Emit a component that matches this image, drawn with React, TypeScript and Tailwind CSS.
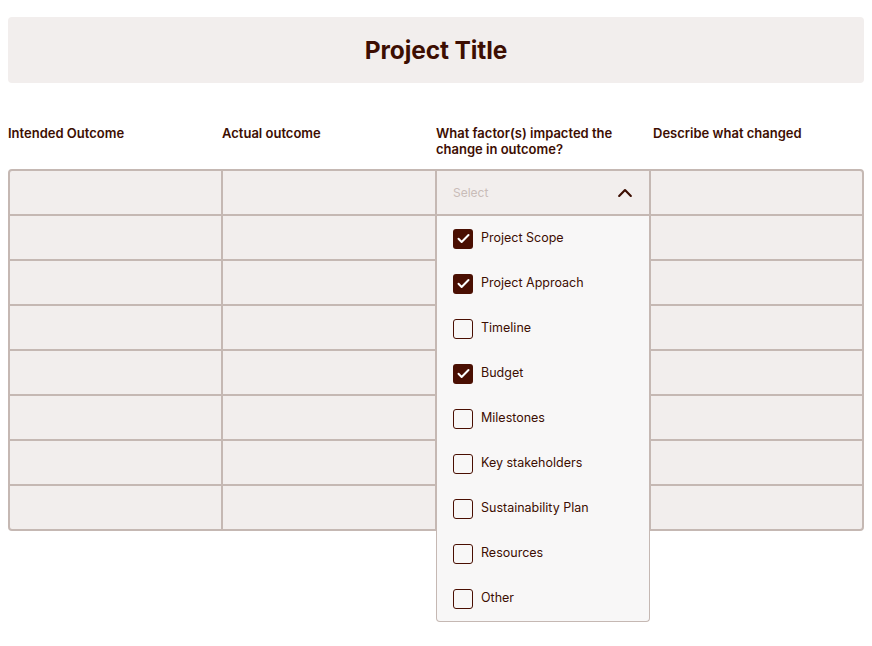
import React, { useState } from 'react';

const factors = [
  { label: 'Project Scope', checked: true },
  { label: 'Project Approach', checked: true },
  { label: 'Timeline', checked: false },
  { label: 'Budget', checked: true },
  { label: 'Milestones', checked: false },
  { label: 'Key stakeholders', checked: false },
  { label: 'Sustainability Plan', checked: false },
  { label: 'Resources', checked: false },
  { label: 'Other', checked: false },
];

const headers = [
  'Intended Outcome',
  'Actual outcome',
  'What factor(s) impacted the change in outcome?',
  'Describe what changed',
];

function CheckBox({ checked }: { checked: boolean }) {
  if (checked) {
    return (
      <span className="w-5 h-5 rounded-[3px] bg-[#4a0f02] flex items-center justify-center shrink-0">
        <svg width="15" height="15" viewBox="0 0 24 24" fill="none" stroke="white" strokeWidth="3.2" strokeLinecap="round" strokeLinejoin="round">
          <path d="M4 12.5l5 5L20 6.5" />
        </svg>
      </span>
    );
  }
  return <span className="w-5 h-5 rounded-[3px] border-[1.5px] border-[#4a0f02] bg-[#f8f7f7] shrink-0" />;
}

export default function App() {
  const [items, setItems] = useState(factors);
  const [open, setOpen] = useState(true);

  const toggle = (i: number) =>
    setItems(list => list.map((f, j) => (j === i ? { ...f, checked: !f.checked } : f)));

  return (
    <div className="min-h-screen bg-white px-2 pt-[17px] font-['Inter',sans-serif] text-[#3d0e02]">
      {/* Title */}
      <div className="h-[66px] rounded bg-[#f2eeed] flex items-center justify-center">
        <h1 className="text-[24.5px] font-bold tracking-[-0.1px]">Project Title</h1>
      </div>

      {/* Column headings */}
      <div className="grid grid-cols-[214px_214px_214px_1fr] mt-[42px] h-[44px]">
        {headers.map((h, i) => (
          <div key={h} className={`text-[13px] leading-4 font-semibold pr-5 ${i === 3 ? 'pl-[3px]' : ''}`}>
            {h}
          </div>
        ))}
      </div>

      {/* Table */}
      <div className="border-2 border-[#c5b8b3] rounded bg-[#f2eeed]">
        {Array.from({ length: 8 }).map((_, r) => (
          <div key={r} className={`grid grid-cols-[213px_214px_214px_1fr] h-[43px] ${r < 7 ? 'border-b-2 border-[#c5b8b3] box-content' : ''}`}>
            {[0, 1, 2, 3].map(c => (
              <div key={c} className={`relative ${c < 3 ? 'border-r-2 border-[#c5b8b3]' : ''}`}>
                {r === 0 && c === 2 && (
                  <>
                    <button
                      onClick={() => setOpen(o => !o)}
                      className="w-full h-full flex items-center justify-between pl-[16px] pr-[14px] text-[12px] text-[#c9bcb8]"
                    >
                      <span>Select</span>
                      <svg width="20" height="20" viewBox="0 0 24 24" fill="none" stroke="#3d0e02" strokeWidth="2.6" strokeLinecap="round" strokeLinejoin="round">
                        <path d="M5 15.5l7-7 7 7" />
                      </svg>
                    </button>
                    {open && (
                      <div className="absolute z-10 top-[45px] -left-px w-[214px] bg-[#f8f7f7] border border-t-0 border-[#c5b8b3] rounded-b">
                        {items.map((f, i) => (
                          <label
                            key={f.label}
                            onClick={() => toggle(i)}
                            className="h-[45px] flex items-center gap-2 pl-4 text-[12.5px] cursor-pointer"
                          >
                            <CheckBox checked={f.checked} />
                            <span>{f.label}</span>
                          </label>
                        ))}
                      </div>
                    )}
                  </>
                )}
              </div>
            ))}
          </div>
        ))}
      </div>
    </div>
  );
}
